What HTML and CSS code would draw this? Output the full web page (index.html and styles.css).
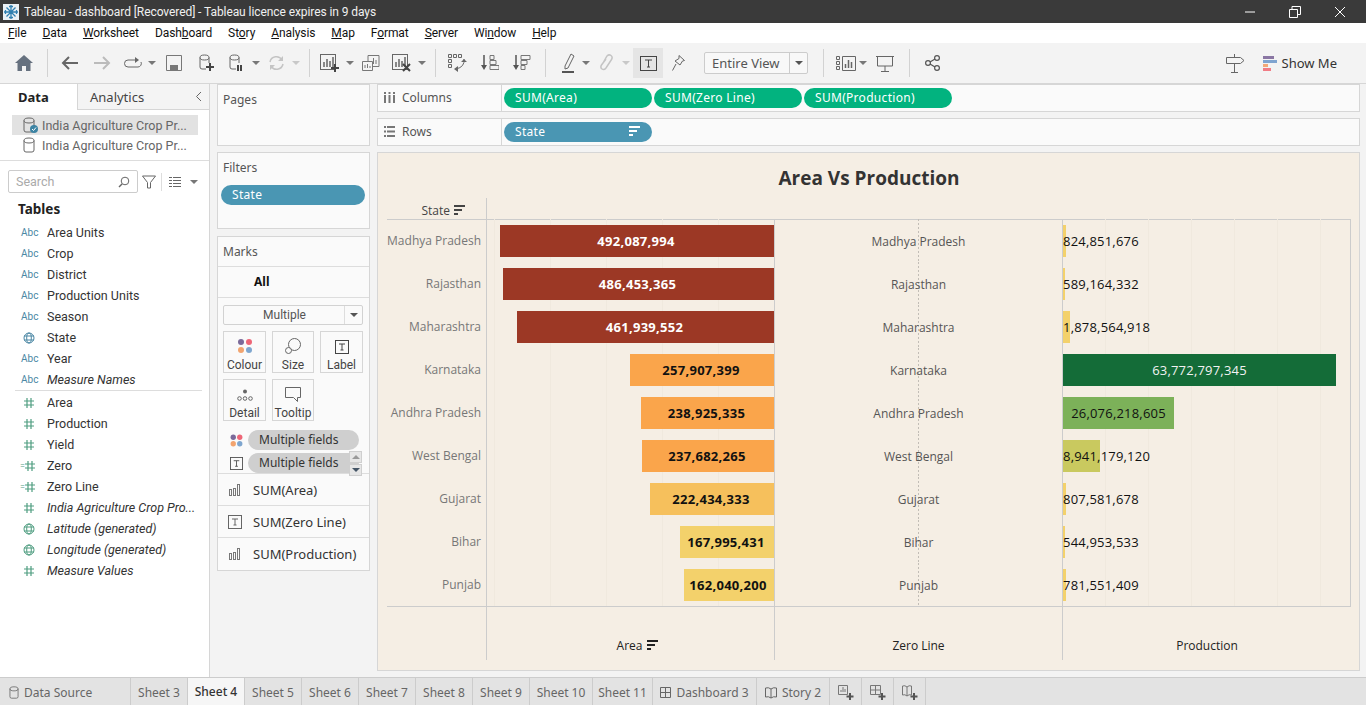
FILE: index.html
```html
<!DOCTYPE html>
<html lang="en">
<head>
  <meta charset="UTF-8" />
  <title>Tableau - dashboard [Recovered]</title>
  <link rel="stylesheet" href="styles.css">
</head>
<body>
  <svg class="sprite" width="0" height="0">
    <symbol id="i-hash" viewBox="0 0 12 12"><path d="M4 1v10M8 1v10M1 4h10M1 8h10" fill="none" stroke="#4f9d80" stroke-width="1.2"/></symbol>
    <symbol id="i-globe" viewBox="0 0 12 12"><g fill="none" stroke="currentColor"><circle cx="6" cy="6" r="5"/><ellipse cx="6" cy="6" rx="2.3" ry="5"/><path d="M1 4h10M1 8h10"/></g></symbol>
    <symbol id="i-db" viewBox="0 0 12 16"><g fill="none" stroke="currentColor"><ellipse cx="6" cy="3.5" rx="5" ry="2.5"/><path d="M1 3.5v9.5q0 2 2 2h6q2 0 2-2V3.5"/></g></symbol>
    <symbol id="i-sort" viewBox="0 0 11 11"><path d="M0 0h11v2H0zM0 4h8v2H0zM0 8h4v2H0z" fill="currentColor"/></symbol>
    <symbol id="i-t" viewBox="0 0 14 14"><rect x=".5" y=".5" width="13" height="13" fill="none" stroke="currentColor"/><path d="M4 4h6M7 4v6M5.500 10h3" fill="none" stroke="currentColor"/></symbol>
    <symbol id="i-bars" viewBox="0 0 12 12"><g fill="none" stroke="#777"><rect x=".5" y="5.5" width="2" height="6"/><rect x="4.5" y="4.5" width="2" height="7"/><rect x="8.5" y=".5" width="2" height="11"/></g></symbol>
    <symbol id="i-chart" viewBox="0 0 16 16"><rect x=".5" y=".5" width="15" height="15" fill="none" stroke="#666"/><path d="M4 8v5M7 5v8M10 7v6M13 3v10" stroke="#666" stroke-width="1.5"/></symbol>
  </svg>

  <header class="titlebar">
    <svg class="app-logo" width="16" height="16" viewBox="0 0 16 16"><rect width="16" height="16" fill="#e9f0f5"/><path d="M8 1v14M1 8h14M3.500 3.500l9 9M12.500 3.500l-9 9M6 2.500h4M6 13.500h4M2.500 6v4M13.500 6v4" stroke="#2f7fb0" stroke-width="1.3" fill="none"/></svg>
    <span class="title-text">Tableau - dashboard [Recovered] - Tableau licence expires in 9 days</span>
    <div class="win-controls">
      <svg width="12" height="12" viewBox="0 0 12 12"><path d="M1 6h10" stroke="#fff"/></svg>
      <svg width="12" height="12" viewBox="0 0 12 12"><path d="M.5 3.500h8v8h-8zM3 3.500V.5h8.500v8h-3" fill="none" stroke="#fff"/></svg>
      <svg width="12" height="12" viewBox="0 0 12 12"><path d="M1 1l10 10M11 1L1 11" stroke="#fff"/></svg>
    </div>
  </header>

  <nav class="menubar">
    <span><u>F</u>ile</span><span><u>D</u>ata</span><span><u>W</u>orksheet</span><span>Dash<u>b</u>oard</span><span>St<u>o</u>ry</span><span><u>A</u>nalysis</span><span><u>M</u>ap</span><span>F<u>o</u>rmat</span><span><u>S</u>erver</span><span>Wi<u>n</u>dow</span><span><u>H</u>elp</span>
  </nav>

  <div class="toolbar">
    <button class="tool"><svg width="18" height="16" viewBox="0 0 18 16"><path d="M9 0l9 8h-2.500v8H11v-5H7v5H2.500V8H0z" fill="#66717f"/></svg></button>
    <i class="sep sep-first"></i>
    <button class="tool"><svg width="18" height="16" viewBox="0 0 18 16"><path d="M17 8H2M8 2L2 8l6 6" fill="none" stroke="#666" stroke-width="2"/></svg></button>
    <button class="tool"><svg width="18" height="16" viewBox="0 0 18 16"><path d="M1 8h15M10 2l6 6-6 6" fill="none" stroke="#bbb" stroke-width="2"/></svg></button>
    <button class="tool tool-n"><svg width="19" height="14" viewBox="0 0 19 14"><path d="M13 4H5a3.500 3.500 0 0 0 0 7h10a3.500 3.500 0 0 0 3-5" fill="none" stroke="#666"/><path d="M12 1l4 3-4 3z" fill="#666"/></svg></button>
    <i class="caret"></i>
    <button class="tool"><svg width="16" height="16" viewBox="0 0 16 16"><path d="M.5.500h15v15H.5z" fill="none" stroke="#777"/><path d="M4 15v-5h8v5M7 12h3v3H7z" fill="#777"/></svg></button>
    <button class="tool"><svg width="15" height="18" viewBox="0 0 15 18"><g fill="none" stroke="#666"><ellipse cx="5.500" cy="3.500" rx="4.500" ry="2.500"/><path d="M1 3.500V13q0 2 2 2h4M10 3.500V9"/></g><path d="M11 9v8M7 13h8" stroke="#444" stroke-width="2"/></svg></button>
    <button class="tool tool-n"><svg width="14" height="18" viewBox="0 0 14 18"><g fill="none" stroke="#666"><ellipse cx="5.500" cy="3.500" rx="4.500" ry="2.500"/><path d="M1 3.500V13q0 2 2 2h4M10 3.500V9"/></g><path d="M9 11v6M12 11v6" stroke="#444" stroke-width="2"/></svg></button>
    <i class="caret"></i>
    <button class="tool tool-n"><svg width="17" height="16" viewBox="0 0 17 16"><path d="M2 7a6.500 6.500 0 0 1 12-2M15 9a6.500 6.500 0 0 1-12 2" fill="none" stroke="#c4c4c4" stroke-width="1.500"/><path d="M15 1v5h-5zM2 15v-5h5z" fill="#c4c4c4"/></svg></button>
    <i class="caret caret-off"></i>
    <i class="sep"></i>
    <button class="tool tool-m"><svg width="19" height="18" viewBox="0 0 19 18"><use href="#i-chart" width="16" height="16"/><path d="M15 10v8M11 14h8" stroke="#444" stroke-width="2"/></svg></button>
    <i class="caret"></i>
    <button class="tool tool-m"><svg width="18" height="16" viewBox="0 0 18 16"><path d="M6 .500h11v11H6z" fill="#f3f3f3" stroke="#777"/><path d="M9 9V6M11.500 9V3M14 9V5" stroke="#777"/><path d="M.500 6.500h10v9H.500z" fill="#f3f3f3" stroke="#777"/><path d="M3 13v-3M5.500 13V9M8 13v-2" stroke="#777"/></svg></button>
    <button class="tool tool-m"><svg width="19" height="18" viewBox="0 0 19 18"><use href="#i-chart" width="16" height="16"/><path d="M11 10l7 7M18 10l-7 7" stroke="#444" stroke-width="2"/></svg></button>
    <i class="caret"></i>
    <i class="sep"></i>
    <button class="tool tool-swap"><svg width="19" height="18" viewBox="0 0 19 18"><g fill="none" stroke="#666"><path d="M.500.500h3v3h-3zM5.500.500h3v3h-3zM10.500.500h3v3h-3zM.500 5.500h3v3h-3zM.500 10.500h3v3h-3z"/><path d="M16 5q1 8-8 10"/></g><path d="M13 8l3-3 3 3zM10 12v6l-4-3z" fill="#666"/></svg></button>
    <button class="tool"><svg width="18" height="16" viewBox="0 0 18 16"><path d="M3 0v13" stroke="#555" stroke-width="1.500"/><path d="M0 10l3 5 3-5z" fill="#555"/><g fill="none" stroke="#777"><path d="M9 .500h4v4H9zM9 5.500h6v4H9zM9 10.500h9v4H9z"/></g></svg></button>
    <button class="tool"><svg width="18" height="16" viewBox="0 0 18 16"><path d="M3 0v13" stroke="#555" stroke-width="1.500"/><path d="M0 10l3 5 3-5z" fill="#555"/><g fill="none" stroke="#777"><path d="M8 .500h9v4H8zM8 5.500h6v4H8zM8 10.500h4v4H8z"/></g></svg></button>
    <i class="sep"></i>
    <button class="tool tool-hl"><svg width="13" height="20" viewBox="0 0 13 20"><path d="M3 13L9 1l3 2-6 12-3 1z" fill="none" stroke="#666"/><path d="M0 19h12" stroke="#555" stroke-width="2"/></svg></button>
    <i class="caret"></i>
    <button class="tool tool-n"><svg width="13" height="18" viewBox="0 0 13 18"><path d="M3 9L7 2q2-2 4-.5t.5 4L6 14q-2 2.500-4 1t-.5-4L6 5" fill="none" stroke="#c4c4c4" stroke-width="1.500"/></svg></button>
    <i class="caret caret-off"></i>
    <button class="tool tool-on"><svg width="17" height="15" viewBox="0 0 17 15"><rect x=".5" y=".5" width="16" height="14" fill="none" stroke="#444"/><path d="M5 4h7M8.500 4v7M7 11h3" fill="none" stroke="#444"/></svg></button>
    <button class="tool tool-pin"><svg width="13" height="16" viewBox="0 0 13 16"><path d="M7 .5l5.500 5-2 .5-2.500 4-5-4 4-2.500zM4 9l-3.500 6.500" fill="none" stroke="#666"/></svg></button>
    <div class="fit-select"><span class="fit-text">Entire View</span><span class="fit-arrow"><i class="caret caret-dark"></i></span></div>
    <i class="sep sep-fit"></i>
    <button class="tool tool-labels"><svg width="20" height="15" viewBox="0 0 20 15"><g fill="none" stroke="#666"><path d="M.500.500h3v3h-3zM.500 5.500h3v3h-3zM.500 10.500h3v3h-3zM6.500.500h13v14h-13z"/></g><path d="M9.500 12V8M12.500 12V4M15.500 12V6" stroke="#666" stroke-width="1.500"/></svg></button>
    <i class="caret caret-tight"></i>
    <button class="tool tool-present"><svg width="18" height="17" viewBox="0 0 18 17"><path d="M0 1.500h18M1.500 2v9h15V2M9 11v5M5 16.500h8" fill="none" stroke="#666"/></svg></button>
    <i class="sep"></i>
    <button class="tool tool-share"><svg width="15" height="16" viewBox="0 0 15 16"><g fill="none" stroke="#555" stroke-width="1.200"><circle cx="3" cy="8" r="2.400"/><circle cx="12" cy="3" r="2.400"/><circle cx="12" cy="13" r="2.400"/><path d="M5 7l5-3M5 9l5 3"/></g></svg></button>
    <div class="toolbar-right">
      <svg width="19" height="19" viewBox="0 0 19 19"><path d="M.5 3.500h14l3.500 3-3.500 3H.5zM8.500 0v3.500M8.500 9.500V18M5 18.500h7" fill="none" stroke="#666"/></svg>
      <button class="showme">
        <span class="showme-icon"><i class="sm1"></i><i class="sm2"></i><i class="sm3"></i><i class="sm4"></i></span>
        Show Me
      </button>
    </div>
  </div>

  <main class="workspace">
    <aside class="side">
      <div class="side-tabs">
        <div class="side-tab side-tab-on">Data</div>
        <div class="side-tab">Analytics<svg class="collapse" width="7" height="11" viewBox="0 0 7 11"><path d="M6 1L1.500 5.500 6 10" fill="none" stroke="#666"/></svg></div>
      </div>
      <div class="sources">
        <div class="source source-on"><span class="db-wrap"><svg class="db" width="12" height="16"><use href="#i-db"/></svg><svg class="check" width="8" height="8" viewBox="0 0 8 8"><circle cx="4" cy="4" r="4" fill="#3c83a3"/><path d="M2 4l1.500 1.500L6 2.500" fill="none" stroke="#fff"/></svg></span>India Agriculture Crop Pr...</div>
        <div class="source"><span class="db-wrap"><svg class="db" width="12" height="16"><use href="#i-db"/></svg></span>India Agriculture Crop Pr...</div>
      </div>
      <div class="search-row">
        <div class="search"><span>Search</span><svg width="12" height="12" viewBox="0 0 12 12"><circle cx="7" cy="5" r="3.800" fill="none" stroke="#666"/><path d="M4 8l-3 3" stroke="#666" stroke-width="1.400"/></svg></div>
        <svg class="funnel" width="14" height="14" viewBox="0 0 14 14"><path d="M.5 1h13L8.500 7.500V13h-3V7.500z" fill="none" stroke="#666"/></svg>
        <i class="search-sep"></i>
        <svg width="12" height="10" viewBox="0 0 12 10"><path d="M0 .5h3M4 .5h8M0 3.500h3M4 3.500h8M0 6.500h3M4 6.500h8M0 9.500h3M4 9.500h8" stroke="#666"/></svg>
        <i class="caret"></i>
      </div>
      <h3 class="tables">Tables</h3>
      <ul class="fields">
        <li><span class="abc">Abc</span>Area Units</li>
        <li><span class="abc">Abc</span>Crop</li>
        <li><span class="abc">Abc</span>District</li>
        <li><span class="abc">Abc</span>Production Units</li>
        <li><span class="abc">Abc</span>Season</li>
        <li><span class="abc"><svg class="globe-blue" width="12" height="12"><use href="#i-globe"/></svg></span>State</li>
        <li><span class="abc">Abc</span>Year</li>
        <li class="em"><span class="abc">Abc</span>Measure Names</li>
      </ul>
      <ul class="fields fields-measures">
        <li><span class="abc"><svg width="12" height="12"><use href="#i-hash"/></svg></span>Area</li>
        <li><span class="abc"><svg width="12" height="12"><use href="#i-hash"/></svg></span>Production</li>
        <li><span class="abc"><svg width="12" height="12"><use href="#i-hash"/></svg></span>Yield</li>
        <li><span class="abc abc-calc"><b>=</b><svg width="12" height="12"><use href="#i-hash"/></svg></span>Zero</li>
        <li><span class="abc abc-calc"><b>=</b><svg width="12" height="12"><use href="#i-hash"/></svg></span>Zero Line</li>
        <li class="em"><span class="abc"><svg width="12" height="12"><use href="#i-hash"/></svg></span>India Agriculture Crop Pro...</li>
        <li class="em"><span class="abc"><svg class="globe-green" width="12" height="12"><use href="#i-globe"/></svg></span>Latitude (generated)</li>
        <li class="em"><span class="abc"><svg class="globe-green" width="12" height="12"><use href="#i-globe"/></svg></span>Longitude (generated)</li>
        <li class="em"><span class="abc"><svg width="12" height="12"><use href="#i-hash"/></svg></span>Measure Values</li>
      </ul>
    </aside>

    <section class="cards">
      <div class="card card-pages"><div class="card-title">Pages</div></div>
      <div class="card card-filters">
        <div class="card-title">Filters</div>
        <div class="pill pill-blue pill-filter">State</div>
      </div>
      <div class="card card-marks">
        <div class="card-title marks-title">Marks</div>
        <div class="marks-all">All</div>
        <div class="marks-body">
          <div class="mark-type"><span>Multiple</span><span class="mark-arrow"><i class="caret caret-dark"></i></span></div>
          <div class="mark-buttons">
            <div class="mark-btn">
              <svg width="16" height="16" viewBox="0 0 16 16"><circle cx="4" cy="4" r="3" fill="#7b6a9a"/><circle cx="12" cy="4" r="3" fill="#ee6677"/><circle cx="4" cy="12" r="3" fill="#f2a46f"/><circle cx="12" cy="12" r="3" fill="#7ea6cf"/></svg>
              Colour</div>
            <div class="mark-btn">
              <svg width="16" height="16" viewBox="0 0 16 16"><g fill="none" stroke="#666"><circle cx="9.500" cy="6.500" r="6"/><circle cx="3.500" cy="12.500" r="3" fill="#fafafa"/></g></svg>
              Size</div>
            <div class="mark-btn"><svg width="14" height="14"><use href="#i-t"/></svg>Label</div>
            <div class="mark-btn">
              <svg width="16" height="14" viewBox="0 0 16 14"><circle cx="8" cy="3.500" r="2" fill="#666"/><g fill="none" stroke="#666"><circle cx="2.500" cy="10.500" r="1.800"/><circle cx="8" cy="10.500" r="1.800"/><circle cx="13.500" cy="10.500" r="1.800"/></g></svg>
              Detail</div>
            <div class="mark-btn">
              <svg width="16" height="15" viewBox="0 0 16 15"><path d="M.5.500h15v10h-3v4l-4-4H.5z" fill="none" stroke="#666"/></svg>
              Tooltip</div>
          </div>
          <div class="mark-pills">
            <div class="mark-pill-row">
              <svg width="13" height="13" viewBox="0 0 16 16"><circle cx="4" cy="4" r="3.300" fill="#7b6a9a"/><circle cx="12" cy="4" r="3.300" fill="#ee6677"/><circle cx="4" cy="12" r="3.300" fill="#f2a46f"/><circle cx="12" cy="12" r="3.300" fill="#7ea6cf"/></svg>
              <span class="pill pill-gray">Multiple fields</span>
            </div>
            <div class="mark-pill-row">
              <svg width="13" height="13"><use href="#i-t"/></svg>
              <span class="pill pill-gray">Multiple fields</span>
              <span class="spin"><i class="spin-up"></i><i class="spin-down"></i></span>
            </div>
          </div>
        </div>
        <div class="mark-row"><svg width="12" height="12"><use href="#i-bars"/></svg>SUM(Area)</div>
        <div class="mark-row"><svg width="14" height="14"><use href="#i-t"/></svg>SUM(Zero Line)</div>
        <div class="mark-row"><svg width="12" height="12"><use href="#i-bars"/></svg>SUM(Production)</div>
      </div>
    </section>

    <section class="sheet">
      <div class="shelf">
        <div class="shelf-label"><svg width="11" height="11" viewBox="0 0 11 11"><path d="M0 0h2v2H0zM4.500 0h2v2h-2zM9 0h2v2H9zM0 3h2v8H0zM4.500 3h2v8h-2zM9 3h2v8H9z" fill="#777"/></svg>Columns</div>
        <div class="shelf-pills">
          <div class="pill pill-green">SUM(Area)</div>
          <div class="pill pill-green">SUM(Zero Line)</div>
          <div class="pill pill-green">SUM(Production)</div>
        </div>
      </div>
      <div class="shelf">
        <div class="shelf-label"><svg width="11" height="11" viewBox="0 0 11 11"><path d="M0 0h2v2H0zM3 0h8v2H3zM0 4.500h2v2H0zM3 4.500h8v2H3zM0 9h2v2H0zM3 9h8v2H3z" fill="#777"/></svg>Rows</div>
        <div class="shelf-pills">
          <div class="pill pill-blue pill-sorted">State<svg width="11" height="11"><use href="#i-sort"/></svg></div>
        </div>
      </div>

      <div class="viz">
        <h2 class="viz-title">Area Vs Production</h2>
        <div class="viz-head">
          <div class="col-state head-state">State <svg width="11" height="11"><use href="#i-sort"/></svg></div>
        </div>

        <div class="row">
          <div class="col-state">Madhya Pradesh</div>
          <div class="col-area"><div class="bar bar-dark" style="width:274px">492,087,994</div></div>
          <div class="col-zero">Madhya Pradesh</div>
          <div class="col-prod"><div class="bar bar-small" style="width:3px">824,851,676</div></div>
        </div>
        <div class="row">
          <div class="col-state">Rajasthan</div>
          <div class="col-area"><div class="bar bar-dark" style="width:271px">486,453,365</div></div>
          <div class="col-zero">Rajasthan</div>
          <div class="col-prod"><div class="bar bar-small" style="width:2px">589,164,332</div></div>
        </div>
        <div class="row">
          <div class="col-state">Maharashtra</div>
          <div class="col-area"><div class="bar bar-dark" style="width:257px">461,939,552</div></div>
          <div class="col-zero">Maharashtra</div>
          <div class="col-prod"><div class="bar bar-small" style="width:7px">1,878,564,918</div></div>
        </div>
        <div class="row">
          <div class="col-state">Karnataka</div>
          <div class="col-area"><div class="bar bar-orange" style="width:144px">257,907,399</div></div>
          <div class="col-zero">Karnataka</div>
          <div class="col-prod"><div class="bar bar-forest" style="width:273px">63,772,797,345</div></div>
        </div>
        <div class="row">
          <div class="col-state">Andhra Pradesh</div>
          <div class="col-area"><div class="bar bar-orange" style="width:133px">238,925,335</div></div>
          <div class="col-zero">Andhra Pradesh</div>
          <div class="col-prod"><div class="bar bar-leaf" style="width:111px">26,076,218,605</div></div>
        </div>
        <div class="row">
          <div class="col-state">West Bengal</div>
          <div class="col-area"><div class="bar bar-orange" style="width:132px">237,682,265</div></div>
          <div class="col-zero">West Bengal</div>
          <div class="col-prod"><div class="bar bar-olive bar-small" style="width:37px">8,941,179,120</div></div>
        </div>
        <div class="row">
          <div class="col-state">Gujarat</div>
          <div class="col-area"><div class="bar bar-amber" style="width:124px">222,434,333</div></div>
          <div class="col-zero">Gujarat</div>
          <div class="col-prod"><div class="bar bar-small" style="width:3px">807,581,678</div></div>
        </div>
        <div class="row">
          <div class="col-state">Bihar</div>
          <div class="col-area"><div class="bar bar-yellow" style="width:94px">167,995,431</div></div>
          <div class="col-zero">Bihar</div>
          <div class="col-prod"><div class="bar bar-small" style="width:2px">544,953,533</div></div>
        </div>
        <div class="row">
          <div class="col-state">Punjab</div>
          <div class="col-area"><div class="bar bar-yellow" style="width:90px">162,040,200</div></div>
          <div class="col-zero">Punjab</div>
          <div class="col-prod"><div class="bar bar-small" style="width:3px">781,551,409</div></div>
        </div>

        <div class="viz-foot">
          <div class="col-state"></div>
          <div class="col-area foot-sorted">Area <svg width="11" height="11"><use href="#i-sort"/></svg></div>
          <div class="col-zero">Zero Line</div>
          <div class="col-prod">Production</div>
        </div>
      </div>
    </section>
  </main>

  <footer class="tabs">
    <div class="tab tab-source"><svg width="10" height="13"><use href="#i-db"/></svg>Data Source</div>
    <div class="tab">Sheet 3</div>
    <div class="tab tab-on">Sheet 4</div>
    <div class="tab">Sheet 5</div>
    <div class="tab">Sheet 6</div>
    <div class="tab">Sheet 7</div>
    <div class="tab">Sheet 8</div>
    <div class="tab">Sheet 9</div>
    <div class="tab tab-10">Sheet 10</div>
    <div class="tab tab-11">Sheet 11</div>
    <div class="tab tab-dash"><svg width="11" height="11" viewBox="0 0 11 11"><path d="M.5.500h10v10H.5zM5.500.500v10M.5 5.500h10" fill="none" stroke="#666"/></svg>Dashboard 3</div>
    <div class="tab tab-story"><svg width="12" height="12" viewBox="0 0 12 12"><path d="M.5 1q3-1 5.500 1 2.500-2 5.500-1v9q-3-1-5.500 1-2.500-2-5.500-1zM6 2v9" fill="none" stroke="#666"/></svg>Story 2</div>
    <div class="tab tab-new"><svg width="16" height="15" viewBox="0 0 16 15"><path d="M.5.500h9v9h-9z" fill="none" stroke="#777"/><path d="M3 7V5M5 7V2M7 7V4" stroke="#777"/><path d="M12 8v7M8.500 11.500h7" stroke="#555" stroke-width="2"/></svg></div>
    <div class="tab tab-new"><svg width="16" height="15" viewBox="0 0 16 15"><path d="M.5.500h10v9H.5zM5.500.500v9M.5 5h10" fill="none" stroke="#777"/><path d="M12 8v7M8.500 11.500h7" stroke="#555" stroke-width="2"/></svg></div>
    <div class="tab tab-new"><svg width="16" height="15" viewBox="0 0 16 15"><path d="M.5 1q2.500-1 4.500 1 2-2 4.500-1v9q-2.500-1-4.500 1-2-2-4.500-1zM5 2v9" fill="none" stroke="#777"/><path d="M12 8v7M8.500 11.500h7" stroke="#555" stroke-width="2"/></svg></div>
  </footer>
</body>
</html>
```

FILE: styles.css
```css
* { box-sizing: border-box; }
html, body { margin: 0; height: 100%; }
body {
  width: 1366px;
  height: 705px;
  overflow: hidden;
  display: flex;
  flex-direction: column;
  background: #f3f3f3;
  color: #333;
  font-family: "Noto Sans", sans-serif;
  font-size: 12px;
}
.sprite { position: absolute; }
ul { list-style: none; margin: 0; padding: 0; }
button { border: 0; background: none; padding: 0; font: inherit; color: inherit; }

/* title + menu */
.titlebar {
  height: 23px;
  flex: none;
  display: flex;
  align-items: center;
  background: #3a3a3a;
  color: #f0f0f0;
  padding-left: 3px;
  font-family: Roboto, sans-serif;
  font-size: 12px;
}
.title-text { letter-spacing: -.08px; }
.app-logo { margin-right: 5px; }
.win-controls { margin-left: auto; display: flex; gap: 33px; padding-right: 20px; }
.menubar {
  height: 20px;
  flex: none;
  display: flex;
  align-items: center;
  background: #fff;
  color: #111;
  padding-left: 8px;
  gap: 16px;
  font-family: Roboto, sans-serif;
  letter-spacing: -.1px;
}

/* toolbar */
.toolbar {
  height: 41px;
  flex: none;
  display: flex;
  align-items: center;
  padding-left: 8px;
  border-bottom: 1px solid #d6d6d6;
}
.tool { width: 32px; height: 30px; display: flex; align-items: center; justify-content: center; flex: none; }
.tool-n { width: 28px; }
.tool-m { width: 30px; }
.tool-swap { width: 34px; }
.tool-hl { margin-left: 6px; width: 24px; }
.tool-on { background: #e5e5e5; width: 30px; margin-left: 1px; }
.tool-pin { width: 30px; }
.tool-labels { width: 26px; }
.tool-present { width: 35px; }
.tool-share { width: 36px; }
.sep { width: 1px; height: 28px; background: #d2d2d2; margin: 0 4px 0 7px; flex: none; }
.sep-first { margin-right: 6px; }
.sep-fit { margin: 0 9px 0 15px; }
.caret {
  width: 0; height: 0; flex: none;
  margin: 0 2px;
  border: 4px solid transparent;
  border-top: 4px solid #777;
  border-bottom: 0;
}
.caret-off { border-top-color: #c8c8c8; }
.caret-dark { border-top-color: #555; margin: 0; }
.caret-tight { margin: 0; }
.fit-select {
  width: 104px; height: 22px; margin-left: 11px;
  display: flex; align-items: center;
  background: #f8f8f8;
  border: 1px solid #ccc;
  border-radius: 2px;
  flex: none;
  font-size: 13px;
}
.fit-text { flex: 1; padding-left: 7px; color: #555; }
.fit-arrow { width: 18px; height: 100%; border-left: 1px solid #ccc; display: flex; align-items: center; justify-content: center; }
.toolbar-right { margin-left: auto; display: flex; align-items: center; padding-right: 29px; }
.showme { display: flex; align-items: center; margin-left: 18px; font-size: 13px; color: #333; }
.showme-icon { display: flex; flex-direction: column; gap: 1px; width: 14px; margin-right: 5px; }
.showme-icon i { height: 3px; display: block; }
.sm1 { width: 11px; background: #8a76a3; }
.sm2 { width: 14px; background: #7fa4d0; }
.sm3 { width: 5px; background: #f2a878; }
.sm4 { width: 8px; background: #f17c85; }

/* main area */
.workspace { flex: 1; display: flex; min-height: 0; }
.side {
  width: 210px;
  flex: none;
  background: #fff;
  border-right: 1px solid #d6d6d6;
  font-family: Roboto, sans-serif;
  font-size: 12.500px;
}
.side-tabs { display: flex; height: 26px; font-family: "Noto Sans", sans-serif; }
.side-tab {
  display: flex; align-items: center;
  font-size: 13px;
  flex: 1;
  background: #f4f4f4;
  border-bottom: 1px solid #d6d6d6;
  border-left: 1px solid #d6d6d6;
  padding-left: 12px;
  color: #444;
}
.side-tab-on {
  flex: none; width: 77px;
  background: #fff;
  border: 0;
  padding-left: 18px;
  font-weight: 700;
  color: #222;
}
.collapse { margin-left: auto; margin-right: 7px; }
.sources { padding: 5px 11px 6px 12px; border-bottom: 1px solid #ddd; height: 51px; }
.source { height: 20px; display: flex; align-items: center; color: #666; }
.source-on { background: #e2e2e2; }
.db-wrap { width: 30px; padding-left: 11px; display: flex; position: relative; color: #666; }
.check { position: absolute; left: 18px; top: 8px; }
.search-row { display: flex; align-items: center; padding: 9px 0 0 8px; height: 32px; }
.search {
  width: 130px; height: 23px;
  display: flex; align-items: center; justify-content: space-between;
  padding: 0 7px;
  border: 1px solid #ccc;
  border-radius: 2px;
  color: #aaa;
}
.funnel { margin-left: 4px; }
.search-sep { width: 1px; height: 18px; background: #ddd; margin: 0 7px 0 5px; }
.search-row .caret { margin: 0 0 0 9px; }
.tables { margin: 8px 0 0 18px; font-family: "Noto Sans", sans-serif; font-size: 13.500px; font-weight: 700; color: #222; line-height: 17px; }
.fields { margin-top: 4px; padding-left: 15px; }
.fields li { height: 21px; display: flex; align-items: center; color: #333; white-space: nowrap; }
.fields .em { font-style: italic; }
.fields-measures { margin: 0 7px 0 15px; padding: 1px 0 0; border-top: 1px solid #ddd; }
.abc {
  width: 32px; flex: none;
  padding-left: 6px;
  display: flex; align-items: center;
  font-style: normal; font-size: 10px;
  color: #4b87a4;
}
.abc svg { margin-left: 2px; }
.abc-calc { padding-left: 5px; }
.abc-calc b { width: 4px; font-weight: 400; font-size: 9px; color: #4f9d80; }
.abc-calc svg { margin-left: 0; }
.globe-blue { color: #4b87a4; }
.globe-green { color: #4f9d80; }

.cards { width: 153px; flex: none; margin-left: 7px; display: flex; flex-direction: column; }
.card { background: #fafafa; border: 1px solid #d6d6d6; }
.card-pages { height: 62px; }
.card-filters { height: 77px; margin-top: 6px; }
.card-marks { height: 335px; margin-top: 7px; }
.card-title { padding: 6px 0 0 5px; line-height: 18px; color: #555; }
.marks-title { height: 30px; border-bottom: 1px solid #ddd; }
.marks-all { height: 31px; border-bottom: 1px solid #ddd; display: flex; align-items: center; padding: 0 0 2px 36px; font-weight: 700; color: #111; }
.marks-body { padding: 7px 6px 0 5px; height: 175px; }
.mark-type {
  height: 20px; display: flex; align-items: center;
  border: 1px solid #d2d2d2; border-radius: 2px;
  color: #555; background: #fafafa;
  font-family: Roboto, sans-serif;
}
.mark-type span:first-child { flex: 1; text-align: center; padding-left: 1px; }
.mark-arrow { width: 18px; height: 100%; border-left: 1px solid #ddd; display: flex; align-items: center; justify-content: center; }
.mark-buttons { margin-top: 6px; display: grid; grid-template-columns: 43px 42px 43px; gap: 6px; }
.mark-btn {
  height: 42px;
  display: flex; flex-direction: column; align-items: center; justify-content: flex-end;
  border: 1px solid #d6d6d6;
  gap: 4px;
  font-family: Roboto, sans-serif;
  font-size: 12px;
  color: #444;
}
.mark-pills { margin-top: 9px; display: flex; flex-direction: column; gap: 3px; }
.mark-pill-row { height: 20px; display: flex; align-items: center; position: relative; padding-left: 7px; color: #555; }
.mark-pill-row svg { margin-right: 5px; flex: none; }
.pill {
  display: flex; align-items: center;
  height: 20px;
  border-radius: 10px;
  color: #fff;
  white-space: nowrap;
  padding: 0 0 1px 11px;
}
.pill-blue { background: #4a96b3; letter-spacing: .3px; }
.pill-green { background: #02b37f; width: 148px; letter-spacing: .3px; }
.pill-gray { background: #cfcfcf; color: #333; width: 111px; }
.pill-filter { margin: 8px 0 0 3px; width: 144px; }
.pill-sorted { width: 148px; justify-content: space-between; padding-right: 12px; }
.spin { position: absolute; right: 1px; top: -2px; width: 13px; height: 25px; display: flex; flex-direction: column; gap: 1px; }
.spin i { flex: 1; background: #e6e6e6; border: 1px solid #cfcfcf; display: flex; align-items: center; justify-content: center; }
.spin-up::after { content: ""; border: 4px solid transparent; border-bottom: 4px solid #999; border-top: 0; }
.spin-down::after { content: ""; border: 4px solid transparent; border-top: 4px solid #456; border-bottom: 0; }
.mark-row { height: 32px; display: flex; align-items: center; border-top: 1px solid #ddd; padding-left: 10px; font-size: 13px; color: #333; white-space: nowrap; }
.mark-row svg { width: 14px; margin-right: 11px; flex: none; color: #666; }

/* sheet */
.sheet { width: 983px; flex: none; margin-left: 7px; display: flex; flex-direction: column; gap: 6px; }
.shelf { height: 28px; flex: none; display: flex; background: #fafafa; border: 1px solid #d6d6d6; }
.shelf-label { width: 124px; display: flex; align-items: center; gap: 7px; padding: 0 0 2px 6px; color: #555; border-right: 1px solid #d6d6d6; }
.shelf-pills { display: flex; align-items: center; gap: 2px; padding-left: 2px; }

.viz { height: 519px; flex: none; background: #f5eee4; border: 1px solid #d6d6d6; padding: 0 8px 0 9px; font-family: "Open Sans", sans-serif; }
.viz-title { margin: 0; height: 45px; padding-top: 10px; text-align: center; font-size: 19px; line-height: 30px; font-weight: 700; color: #333; }
.viz-head { height: 22px; margin-bottom: -1px; border-bottom: 1px solid #ccc; }
.row, .viz-foot { display: grid; grid-template-columns: 100px 288px 288px 288px; }
.row { height: 43px; }
.col-state { border-right: 1px solid #ccc; display: flex; align-items: center; justify-content: flex-end; padding-right: 5px; color: #777; height: 100%; width: 100px; white-space: nowrap; }
.head-state { padding: 4px 21px 0 0; color: #444; font-weight: 500; gap: 4px; }
.col-area {
  display: flex; align-items: center; justify-content: flex-end;
  border-right: 1px solid #ccc;
  background: repeating-linear-gradient(to left, transparent 0 55px, #f0e9de 55px 56px);
}
.col-zero {
  display: flex; align-items: center; justify-content: center;
  padding-top: 2px;
  border-right: 1px solid #ccc;
  color: #555;
  background: repeating-linear-gradient(to bottom, #c2bdb6 0 2px, transparent 2px 4px) center / 1px 100% no-repeat;
}
.col-prod {
  display: flex; align-items: center;
  border-right: 1px solid #ccc;
  background: repeating-linear-gradient(to right, transparent 0 42px, #f0e9de 42px 43px);
}
.bar {
  height: 32px; flex: none;
  display: flex; align-items: center; justify-content: center;
  white-space: nowrap;
  font-size: 13px;
  letter-spacing: .2px;
}
.col-area .bar { font-weight: 700; color: #111; letter-spacing: .3px; padding-right: 2px; }
.col-prod .bar { color: #111; }
.bar-dark { background: #9c3825; }
.col-area .bar-dark { color: #fff; }
.bar-orange { background: #faa54b; }
.bar-amber { background: #f6c05c; }
.bar-yellow { background: #f3d16b; }
.bar-small { background: #f3d16b; justify-content: flex-start; }
.bar-forest { background: #146c38; }
.col-prod .bar-forest { color: #f2f2f2; }
.bar-leaf { background: #7cb159; }
.bar-olive { background: #c9c95f; }

.viz-foot { height: 54px; border-top: 1px solid #ccc; font-weight: 500; }
.viz-foot > div { padding-top: 30px; padding-bottom: 6px; background: none; justify-content: center; color: #222; }
.viz-foot .col-state { padding: 0; }
.viz-foot .col-prod { border-right: 0; }
.viz-foot .foot-sorted { padding-left: 14px; gap: 5px; }

/* tabs */
.tabs { height: 28px; flex: none; display: flex; background: #e3e3e3; border-top: 1px solid #ccc; color: #666; }
.tab { width: 57px; display: flex; align-items: center; justify-content: center; gap: 5px; padding-top: 2px; border-right: 1px solid #ccc; flex: none; white-space: nowrap; }
.tab-source { width: 131px; justify-content: flex-start; padding-left: 9px; }
.tab-on { background: #f6f6f6; color: #333; font-weight: 500; align-items: flex-start; padding-top: 5px; }
.tab-10 { width: 63px; }
.tab-11 { width: 60px; }
.tab-dash { width: 104px; }
.tab-story { width: 73px; }
.tab-new { width: 32px; }
```
